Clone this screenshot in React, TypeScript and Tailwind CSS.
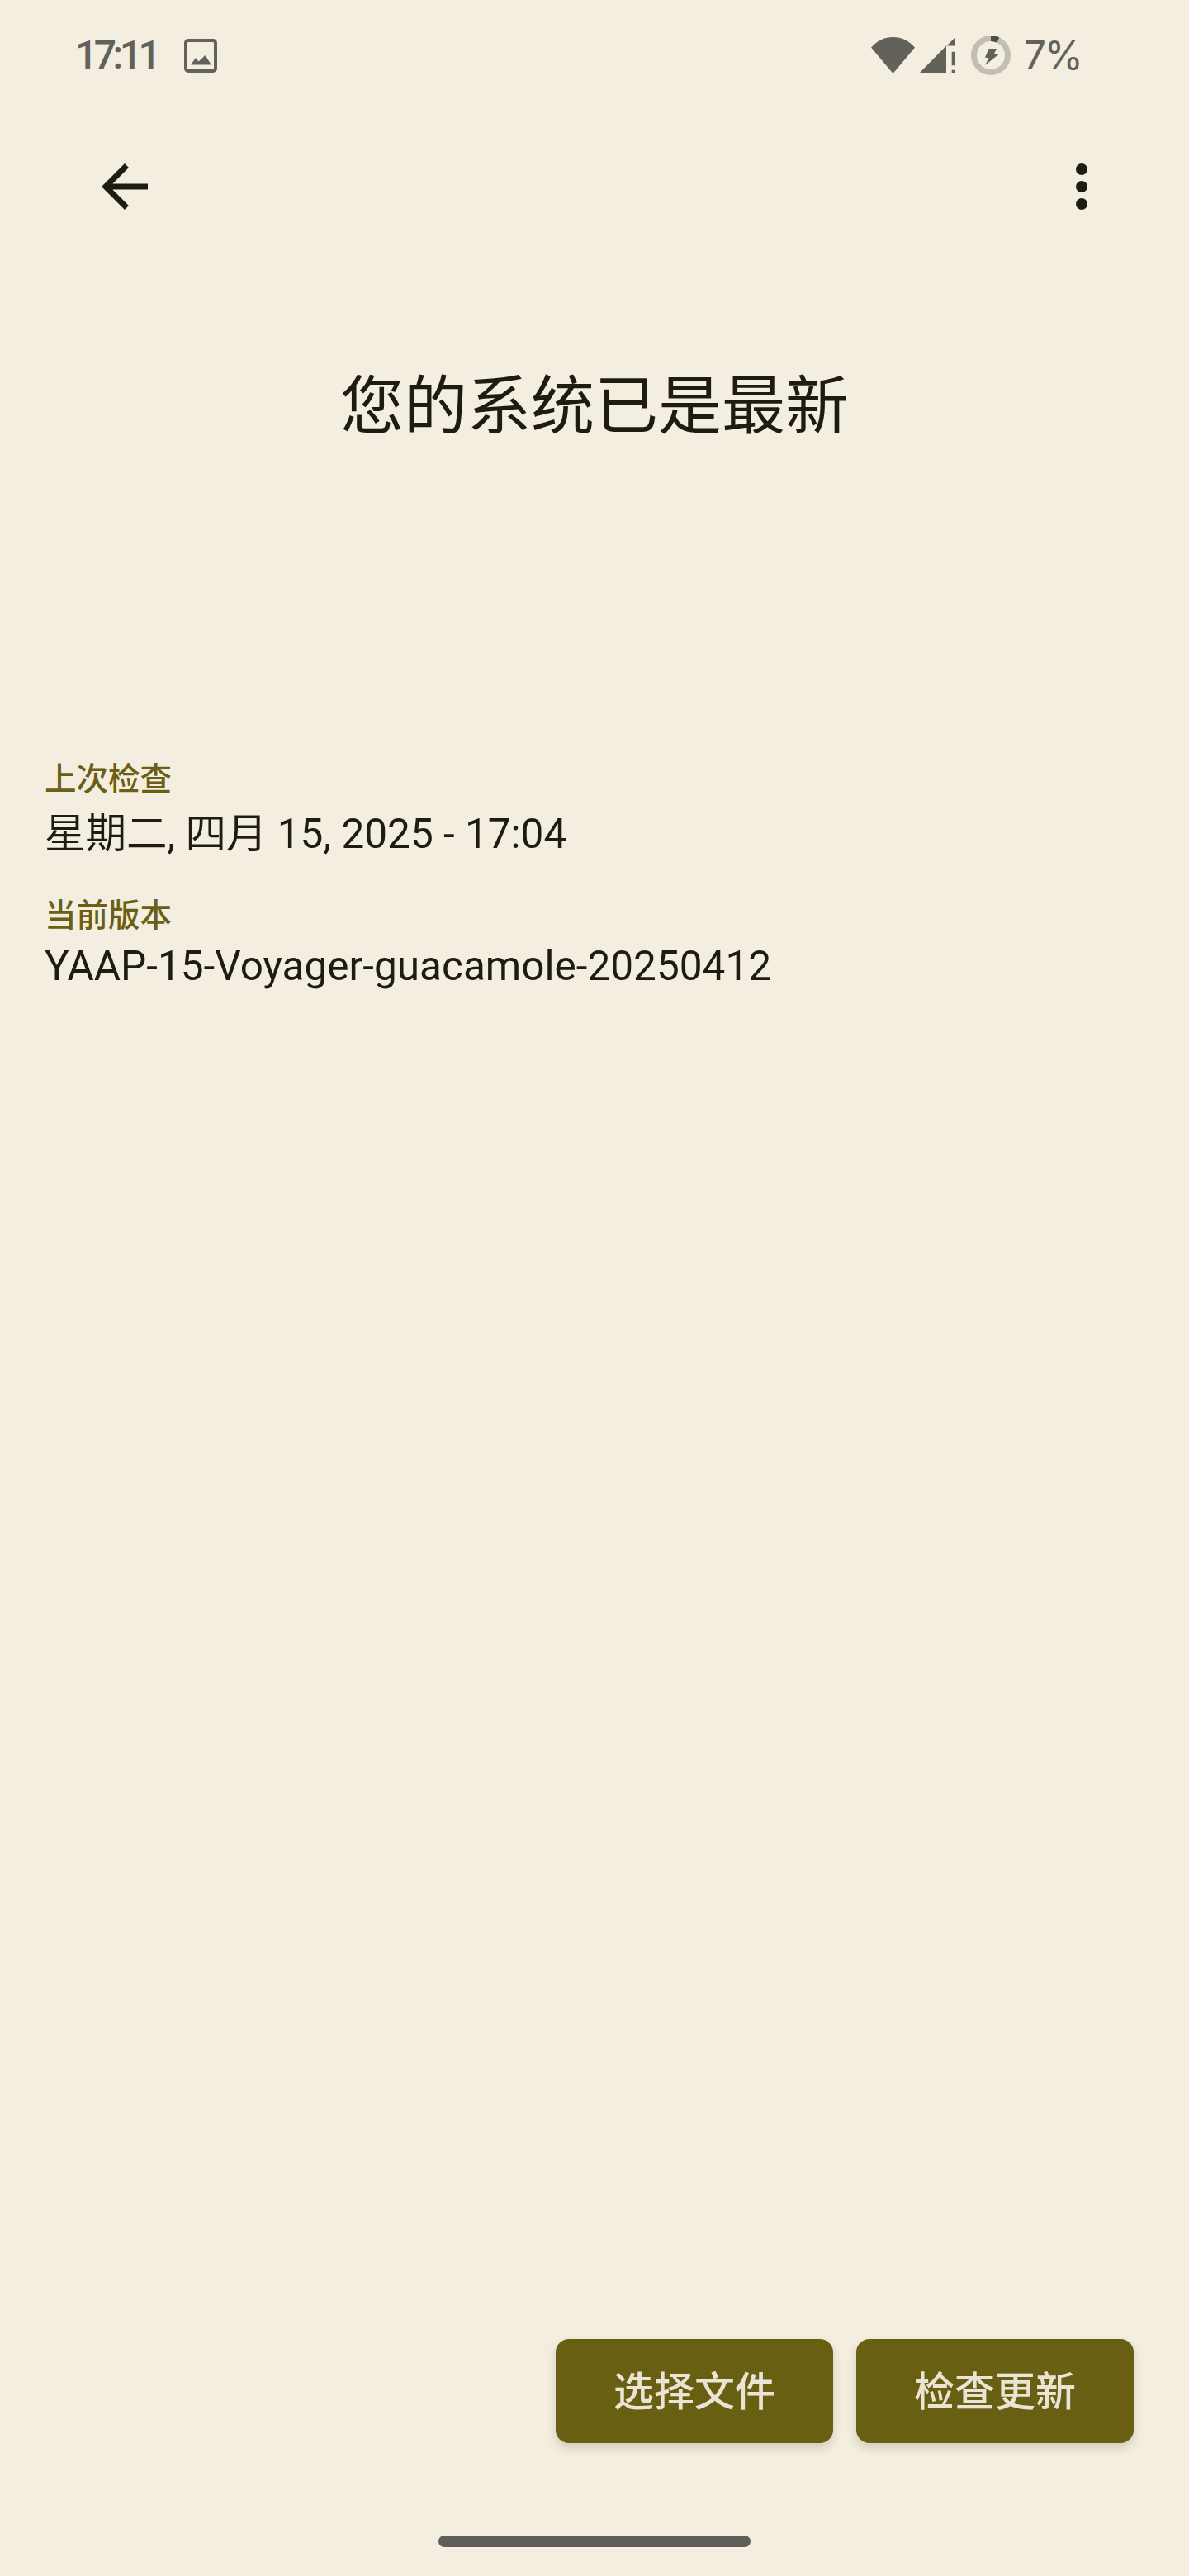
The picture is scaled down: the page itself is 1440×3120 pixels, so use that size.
function StatusIcons() {
  return (
    <div className="flex items-center">
      {/* wifi */}
      <svg width="53" height="44" viewBox="0 0 53 44" className="text-[#62615a]">
        <path d="M0 12.5C7 4.5 16 0 26.500 0S46 4.500 53 12.500L26.500 44z" fill="currentColor" />
      </svg>
      {/* signal with no-service mark */}
      <svg width="44" height="44" viewBox="0 0 44 44" className="ml-[5px] text-[#62615a]">
        <path d="M0 44L33 10.500V44zM44 0V10.500H33.500z" fill="currentColor" />
        <path d="M39.700 17.700H44V34.300H39.700zM39.700 39.700H44V44H39.700z" fill="currentColor" />
      </svg>
      {/* charging battery ring */}
      <svg width="48" height="48" viewBox="0 0 48 48" className="ml-[19px]">
        <circle cx="24" cy="24" r="20.500" fill="none" stroke="#c2bfb2" strokeWidth="7" />
        <path d="M24 3.500A20.500 20.500 0 0 1 32.800 5.500" fill="none" stroke="#4c4b45" strokeWidth="7" />
        <path d="M21.500 16H31L28 22L34 22.500L17 36L21.500 27.500L17 26.500z" fill="#62615a" />
      </svg>
      <span className="ml-[16px] text-[48px] leading-[56px] tracking-[-2px] text-[#62615a] [font-family:Inter,sans-serif]">7%</span>
    </div>
  );
}

function InfoRow({ label, value, gap }: { label: string; value: string; gap: string }) {
  return (
    <div>
      <p className={["h-[52px] text-[38.500px] font-medium leading-[52px] text-[#6a5f14]", gap].join(" ")}>{label}</p>
      <p className="h-[64px] whitespace-nowrap text-[49.500px] leading-[64px] text-[#1d1c13]">{value}</p>
    </div>
  );
}

function ActionButton({ children }: { children: string }) {
  return (
    <button
      type="button"
      className="flex h-[126px] w-[336px] items-center justify-center rounded-[16px] bg-[#695f13] pt-[4px] text-[49px] font-medium text-[#eae4d5] shadow-[0_6px_12px_rgba(60,55,20,0.18)]"
    >
      {children}
    </button>
  );
}

export default function App() {
  return (
    <div className="flex h-[3120px] w-[1440px] flex-col bg-[#f4eee0] [font-family:Roboto,'Noto_Sans_CJK_SC',sans-serif]">
      {/* status bar */}
      <div className="flex h-[134px] items-center justify-between pl-[91px] pr-[130px]">
        <div className="flex items-center">
          <span className="text-[48px] font-medium leading-[56px] tracking-[-4.500px] text-[#62615a]">17:11</span>
          <svg width="40" height="41" viewBox="0 0 40 41" className="ml-[33px]">
            <rect x="2" y="2" width="36" height="37" rx="3" fill="none" stroke="#62615a" strokeWidth="4" />
            <path d="M8 31.500L14 23L17.500 27.500L25.500 20L33 31.500z" fill="#62615a" />
          </svg>
        </div>
        <StatusIcons />
      </div>

      {/* app bar */}
      <div className="flex h-[184px] items-center justify-between pl-[109px] pr-[88px]">
        <svg width="84" height="84" viewBox="0 0 24 24" fill="#1d1c13">
          <path d="M20 11H7.830l5.590-5.590L12 4l-8 8 8 8 1.410-1.410L7.830 13H20v-2z" />
        </svg>
        <svg width="84" height="84" viewBox="0 0 84 84" fill="#1d1c13">
          <circle cx="42" cy="21" r="7" />
          <circle cx="42" cy="42" r="7" />
          <circle cx="42" cy="63" r="7" />
        </svg>
      </div>

      <h1 className="mt-[125px] h-[100px] text-center text-[77px] font-normal leading-[100px] text-[#1d1c13]">您的系统已是最新</h1>

      <div className="mt-[375px] flex flex-col gap-[41px] pl-[54px]">
        <InfoRow label="上次检查" value="星期二, 四月 15, 2025 - 17:04" gap="mb-[8px]" />
        <InfoRow label="当前版本" value="YAAP-15-Voyager-guacamole-20250412" gap="mb-[3px]" />
      </div>

      <div className="flex-1" />

      <div className="flex justify-end gap-[28px] pr-[67px]">
        <ActionButton>选择文件</ActionButton>
        <ActionButton>检查更新</ActionButton>
      </div>

      {/* gesture bar */}
      <div className="mb-[35px] mt-[112px] flex justify-center">
        <div className="h-[14px] w-[378px] rounded-full bg-[#5f5e58]" />
      </div>
    </div>
  );
}
